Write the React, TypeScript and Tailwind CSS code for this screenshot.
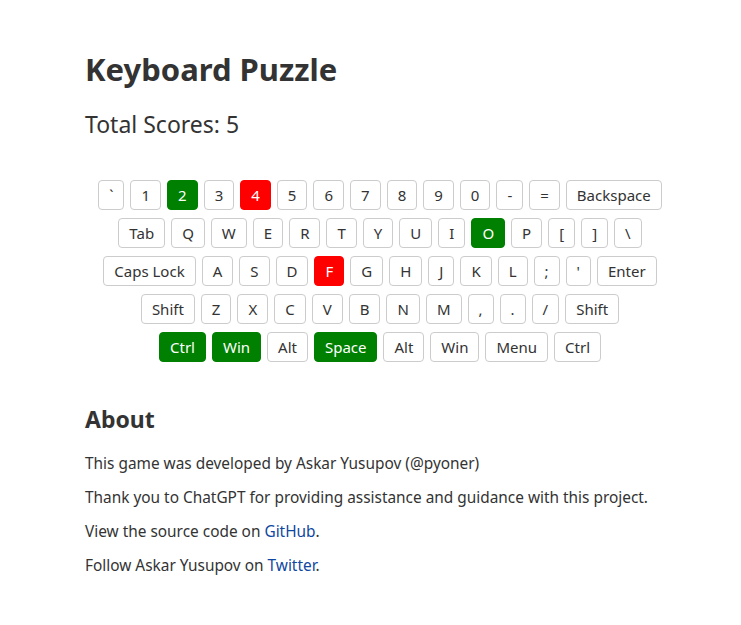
import React from 'react';

type KeyState = 'none' | 'ok' | 'bad';

interface KeyDef {
  label: string;
  state?: KeyState;
}

const rows: KeyDef[][] = [
  [
    { label: '`' },
    { label: '1' },
    { label: '2', state: 'ok' },
    { label: '3' },
    { label: '4', state: 'bad' },
    { label: '5' },
    { label: '6' },
    { label: '7' },
    { label: '8' },
    { label: '9' },
    { label: '0' },
    { label: '-' },
    { label: '=' },
    { label: 'Backspace' },
  ],
  [
    { label: 'Tab' },
    { label: 'Q' },
    { label: 'W' },
    { label: 'E' },
    { label: 'R' },
    { label: 'T' },
    { label: 'Y' },
    { label: 'U' },
    { label: 'I' },
    { label: 'O', state: 'ok' },
    { label: 'P' },
    { label: '[' },
    { label: ']' },
    { label: '\\' },
  ],
  [
    { label: 'Caps Lock' },
    { label: 'A' },
    { label: 'S' },
    { label: 'D' },
    { label: 'F', state: 'bad' },
    { label: 'G' },
    { label: 'H' },
    { label: 'J' },
    { label: 'K' },
    { label: 'L' },
    { label: ';' },
    { label: "'" },
    { label: 'Enter' },
  ],
  [
    { label: 'Shift' },
    { label: 'Z' },
    { label: 'X' },
    { label: 'C' },
    { label: 'V' },
    { label: 'B' },
    { label: 'N' },
    { label: 'M' },
    { label: ',' },
    { label: '.' },
    { label: '/' },
    { label: 'Shift' },
  ],
  [
    { label: 'Ctrl', state: 'ok' },
    { label: 'Win', state: 'ok' },
    { label: 'Alt' },
    { label: 'Space', state: 'ok' },
    { label: 'Alt' },
    { label: 'Win' },
    { label: 'Menu' },
    { label: 'Ctrl' },
  ],
];

function Key({ label, state = 'none' }: KeyDef) {
  const look =
    state === 'ok'
      ? 'bg-[#008000] border-[#008000] text-white'
      : state === 'bad'
        ? 'bg-[#ff0000] border-[#ff0000] text-white'
        : 'bg-white border-[#cccccc] text-[#333333]';
  return (
    <div
      className={`h-[30px] px-[10px] flex items-center justify-center border rounded-[4px] text-[15px] ${look}`}
    >
      {label}
    </div>
  );
}

export default function App() {
  return (
    <div
      className="min-h-[625px] bg-white text-[#333333]"
      style={{ fontFamily: '"Noto Sans", "DejaVu Sans", sans-serif' }}
    >
      <div className="w-[675px] pl-[85px] pt-[49px]">
        <h1 className="text-[31px] font-bold leading-[40px]">Keyboard Puzzle</h1>
        <div className="mt-[20px] text-[23px] leading-[30px]">Total Scores: 5</div>

        <div className="mt-[41px] flex flex-col gap-[8px]">
          {rows.map((row, i) => (
            <div key={i} className="flex justify-center gap-[6px]">
              {row.map((k, j) => (
                <Key key={j} label={k.label} state={k.state} />
              ))}
            </div>
          ))}
        </div>

        <h2 className="mt-[41px] text-[23px] font-bold leading-[32px]">About</h2>
        <div className="mt-[17px] text-[15.4px] leading-[24px] flex flex-col gap-[10px]">
          <p>This game was developed by Askar Yusupov (@pyoner)</p>
          <p>Thank you to ChatGPT for providing assistance and guidance with this project.</p>
          <p>
            View the source code on <a className="text-[#0d47a1]" href="#">GitHub</a>.
          </p>
          <p>
            Follow Askar Yusupov on <a className="text-[#0d47a1]" href="#">Twitter</a>.
          </p>
        </div>
      </div>
    </div>
  );
}
